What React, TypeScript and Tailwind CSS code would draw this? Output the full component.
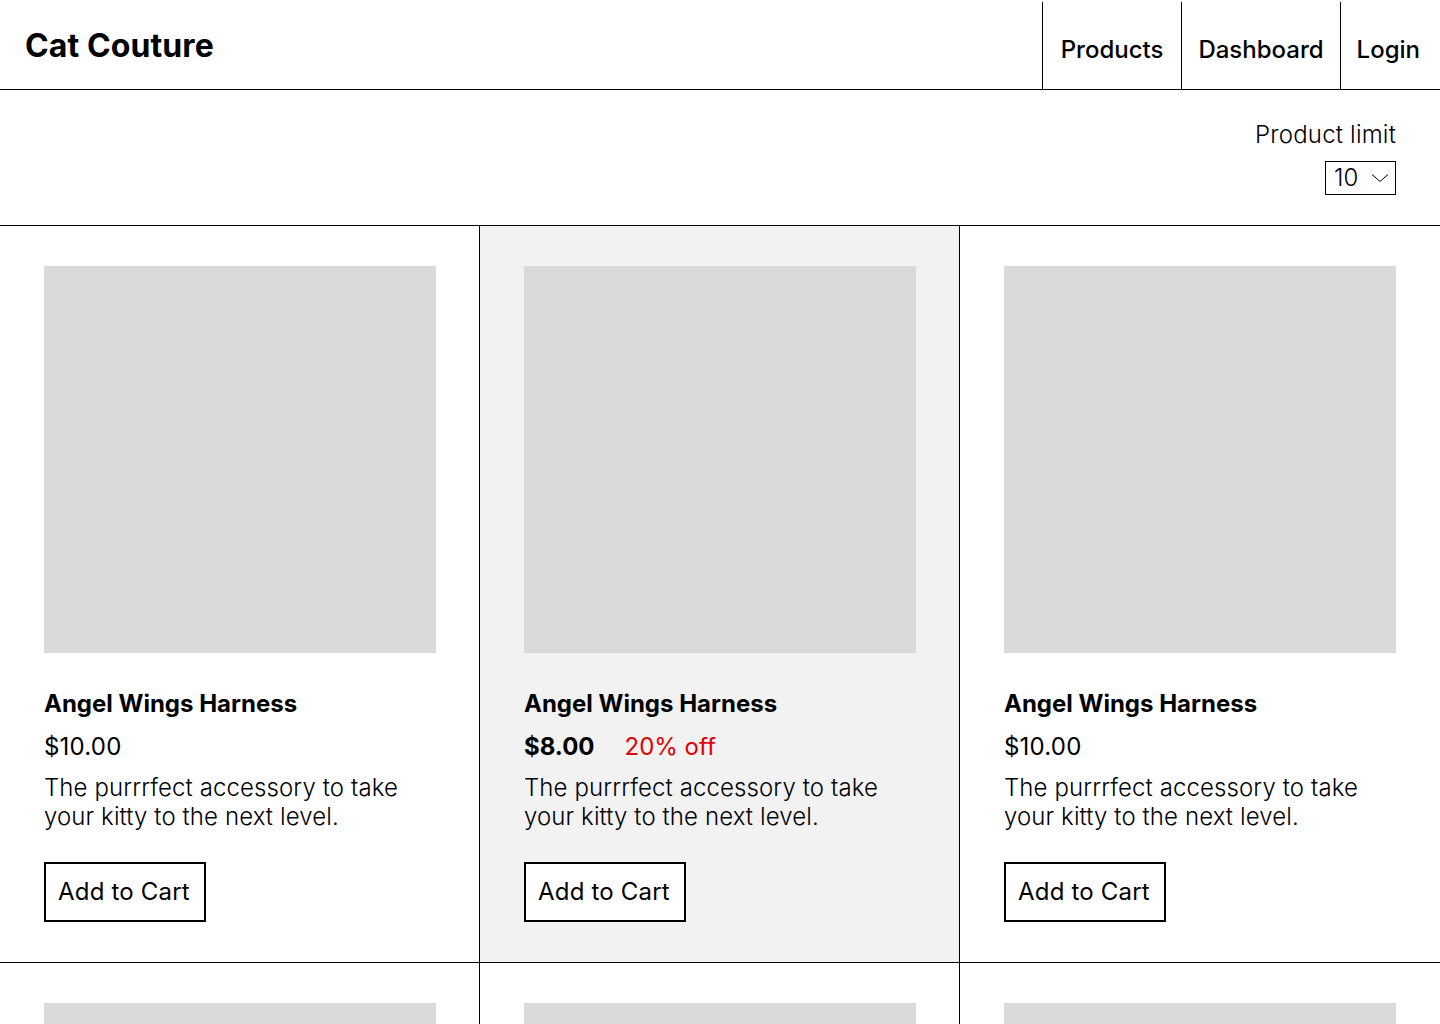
import React from "react";

const products = [
  { name: "Angel Wings Harness", price: "$10.00", sale: null, highlight: false },
  { name: "Angel Wings Harness", price: "$8.00", sale: "20% off", highlight: true },
  { name: "Angel Wings Harness", price: "$10.00", sale: null, highlight: false },
  { name: "Angel Wings Harness", price: "$10.00", sale: null, highlight: false },
  { name: "Angel Wings Harness", price: "$10.00", sale: null, highlight: false },
  { name: "Angel Wings Harness", price: "$10.00", sale: null, highlight: false },
];

const ProductCard = ({ p, last }: { p: (typeof products)[number]; last: boolean }) => {
  return (
    <div
      className={`flex flex-col pl-[44px] pt-[40px] pb-[40px] border-b border-black ${
        last ? "pr-[44px]" : "pr-[43px] border-r"
      } ${p.highlight ? "bg-[#f2f2f2]" : "bg-white"}`}
    >
      <div className="h-[387px] w-full bg-[#d9d9d9]" />
      <h2 className="mt-[36px] text-[24px] leading-[29px] font-bold text-black">{p.name}</h2>
      <div className="mt-[14px] flex items-center gap-[30px] text-[24px] leading-[29px]">
        <span className={p.sale ? "font-bold" : "font-normal tracking-[0.2px]"}>{p.price}</span>
        {p.sale && <span className="text-[#e00000]">{p.sale}</span>}
      </div>
      <p className="mt-[12px] text-[24px] leading-[29px] font-light tracking-[0.1px] text-black">
        The purrrfect accessory to take
        <br />
        your kitty to the next level.
      </p>
      <div className="mt-[31px]">
        <button className="h-[60px] border-2 border-black bg-white pl-[12px] pr-[14px] text-[24px] tracking-[0.2px] text-black">
          Add to Cart
        </button>
      </div>
    </div>
  );
};

export default function App() {
  return (
    <div className="min-h-screen bg-white text-black" style={{ fontFamily: "Inter, 'Noto Sans', sans-serif" }}>
      <header className="flex h-[90px] items-stretch justify-between border-b border-black">
        <div className="flex items-center pl-[25px] pt-[2px]">
          <h1 className="text-[32px] font-bold tracking-[0.1px]">Cat Couture</h1>
        </div>
        <nav className="flex pt-[2px]">
          <a className="flex items-center border-l border-black px-[18px] pt-[8px] text-[24px] font-medium">Products</a>
          <a className="flex items-center border-l border-black px-[16px] pt-[8px] text-[24px] font-medium">Dashboard</a>
          <a className="flex items-center border-l border-black pl-[16px] pr-[20px] pt-[8px] text-[24px] font-medium">Login</a>
        </nav>
      </header>

      <section className="flex h-[136px] flex-col items-end border-b border-black pr-[44px] pt-[30px]">
        <label className="text-[24px] leading-[29px] font-light tracking-[0.2px]">Product limit</label>
        <div className="mt-[12px] flex h-[34px] w-[71px] items-center justify-between border border-black pl-[8px] pr-[6px]">
          <span className="text-[24px] font-light leading-none">10</span>
          <svg width="18" height="10" viewBox="0 0 18 10" fill="none">
            <path d="M1 1.5L9 8.5L17 1.5" stroke="black" strokeWidth="1" />
          </svg>
        </div>
      </section>

      <main className="grid grid-cols-3">
        {products.map((p, i) => (
          <ProductCard key={i} p={p} last={i % 3 === 2} />
        ))}
      </main>
    </div>
  );
}
